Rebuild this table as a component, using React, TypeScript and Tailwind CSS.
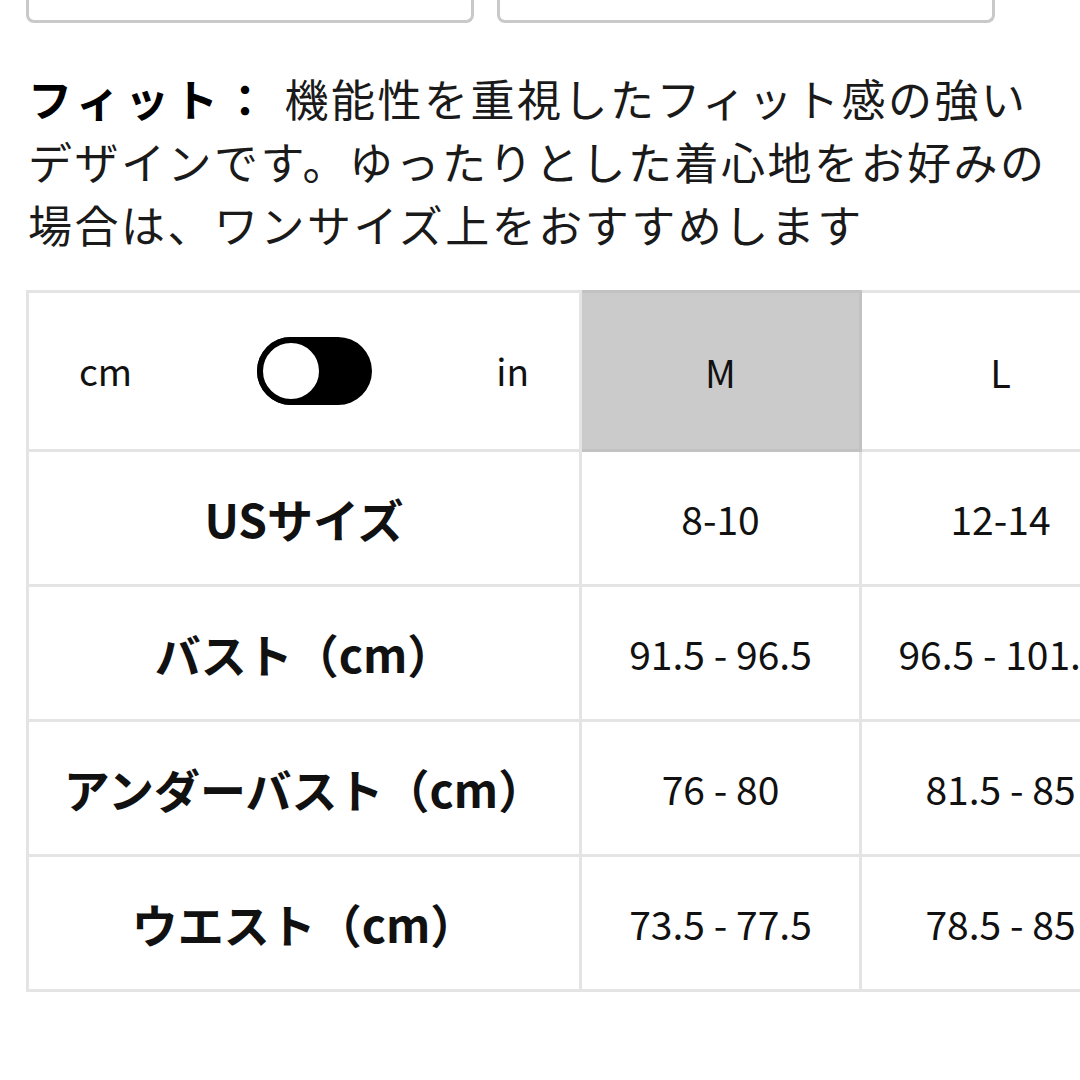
const font = { fontFamily: '"Noto Sans CJK JP", "Noto Sans", sans-serif' };

const rows = [
  { label: "USサイズ", m: "8-10", l: "12-14" },
  { label: "バスト（cm）", m: "91.5 - 96.5", l: "96.5 - 101.5" },
  { label: "アンダーバスト（cm）", m: "76 - 80", l: "81.5 - 85" },
  { label: "ウエスト（cm）", m: "73.5 - 77.5", l: "78.5 - 85" },
];

function Toggle() {
  return (
    <div className="relative w-[115px] h-[68px] rounded-full bg-black">
      <div className="absolute left-0 top-0 w-[68px] h-[68px] rounded-full bg-white border-[6px] border-black" />
    </div>
  );
}

export default function App() {
  return (
    <div className="w-[1080px] h-[1080px] overflow-hidden bg-white text-[#111]" style={font}>
      {/* cut-off boxes from above */}
      <div className="flex gap-[23px] pl-[26px] -mt-[40px]">
        <div className="w-[448px] h-[63px] rounded-b-[8px] border-[3px] border-[#c9c9c9] border-t-0" />
        <div className="w-[498px] h-[63px] rounded-b-[8px] border-[3px] border-[#c9c9c9] border-t-0" />
      </div>

      <p className="mt-[44px] pl-[28px] text-[44px] leading-[63px] tracking-[2.5px] text-[#1a1a1a] whitespace-nowrap">
        <span className="font-bold text-black tracking-[5px]">フィット：</span> 機能性を重視したフィット感の強い
        <br />
        デザインです。ゆったりとした着心地をお好みの
        <br />
        場合は、ワンサイズ上をおすすめします
      </p>

      <table className="mt-[34px] ml-[26px] w-[1113px] border-collapse table-fixed">
        <tbody>
          <tr className="h-[159px]">
            <td className="w-[553px] border-[3px] border-[#e4e4e4] px-[50px]">
              <div className="flex items-center justify-between text-[37px]">
                <span>cm</span>
                <Toggle />
                <span>in</span>
              </div>
            </td>
            <td className="w-[280px] border-[3px] border-[#c2c2c2] bg-[#cbcbcb] text-center text-[38px]">M</td>
            <td className="w-[280px] border-[3px] border-[#e4e4e4] text-center text-[38px]">L</td>
          </tr>
          {rows.map((r) => (
            <tr key={r.label} className="h-[135px]">
              <td className="border-[3px] border-[#e4e4e4] text-center text-[46px] font-bold whitespace-nowrap">{r.label}</td>
              <td className="border-[3px] border-[#e4e4e4] text-center text-[39px] whitespace-nowrap">{r.m}</td>
              <td className="border-[3px] border-[#e4e4e4] text-center text-[39px] whitespace-nowrap">{r.l}</td>
            </tr>
          ))}
        </tbody>
      </table>
    </div>
  );
}
